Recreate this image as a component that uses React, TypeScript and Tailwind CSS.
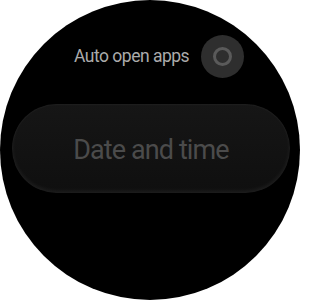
const Toggle = () => (
  <div className="flex h-[43px] w-[43px] shrink-0 items-center justify-center rounded-full bg-[#2e2e2e]">
    <div className="h-[19px] w-[19px] rounded-full border-[3px] border-[#5a5a5a]" />
  </div>
);

export default function App() {
  return (
    <div className="h-[300px] w-[300px] bg-white" style={{ fontFamily: "Roboto, 'Noto Sans', sans-serif" }}>
      <div className="flex h-full w-full flex-col overflow-hidden rounded-full bg-black pt-[35px]">
        <div className="flex w-full items-center gap-[12px] pl-[74px]">
          <span className="pt-[1px] text-[17.5px] leading-none tracking-[-0.5px] text-[#ababab]">Auto open apps</span>
          <Toggle />
        </div>

        <div className="mx-[12px] mt-[26px] flex h-[89px] w-[278px] items-center justify-center rounded-full bg-gradient-to-b from-[#161616] to-[#0f0f0f] shadow-[inset_0_-2px_4px_rgba(255,255,255,0.07),inset_0_1px_2px_rgba(255,255,255,0.04)]">
          <span className="pt-[4px] text-[27px] leading-none tracking-[-0.9px] text-[#4b4b4b]">Date and time</span>
        </div>
      </div>
    </div>
  );
}
